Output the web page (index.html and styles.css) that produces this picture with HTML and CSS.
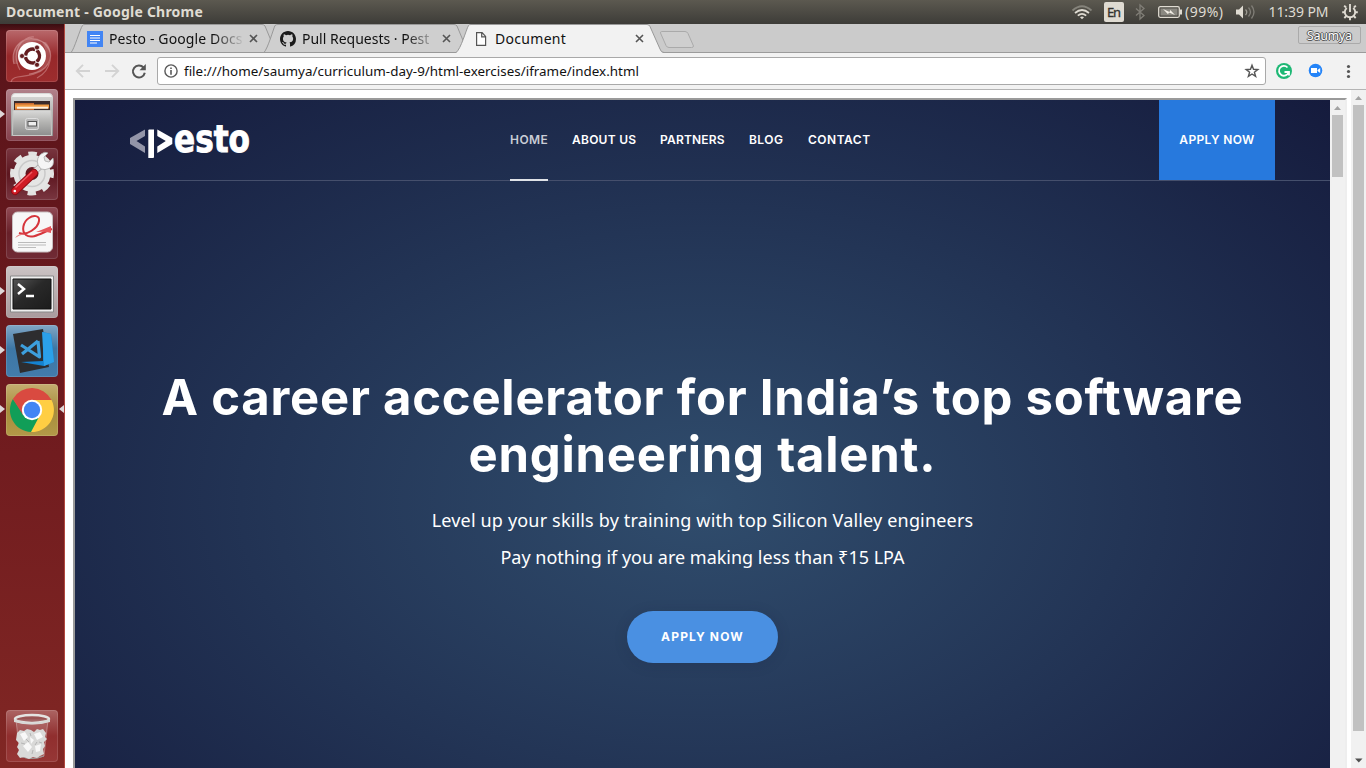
FILE: index.html
```html
<!DOCTYPE html>
<html lang="en">
<head>
<meta charset="utf-8">
<title>Document</title>
<link rel="stylesheet" href="styles.css">
</head>
<body>
<div class="panel">
  <span class="panel-title">Document - Google Chrome</span>
  <svg class="indicators" width="300" height="24" viewBox="1066 0 300 24">
    <g fill="none" stroke-width="1.700">
      <path d="M1072.500 10.500 Q1082 2 1091.500 10.500" stroke="#85837b"/>
      <path d="M1075 13 Q1082 7 1089 13" stroke="#dfdbd2"/>
      <path d="M1077.800 15.700 Q1082 12 1086.200 15.700" stroke="#dfdbd2"/>
    </g>
    <path d="M1080 17.300 Q1082 15.800 1084 17.300 L1082 19.300z" fill="#dfdbd2"/>
    <rect x="1104" y="2" width="20" height="20" rx="2" fill="#dfdbd2"/>
    <text x="1107" y="17" class="lang" textLength="14">En</text>
    <path d="M1136 8.500 L1144 15.500 L1140 19 V5 L1144 8.500 L1136 15.500" fill="none" stroke="#807e77" stroke-width="1.300"/>
    <rect x="1158.700" y="6.700" width="20.600" height="10.600" rx="1.500" fill="none" stroke="#dfdbd2" stroke-width="1.300"/>
    <rect x="1160.500" y="8.500" width="17" height="7" fill="#8a8881"/>
    <path d="M1180 9.500h2v5h-2" fill="#dfdbd2"/>
    <path d="M1163 9l6.500 3 .8-2 4.700 5-6-2.500-1 1.700z" fill="#f2eee6"/>
    <text x="1185" y="17" class="ind" textLength="38">(99%)</text>
    <path d="M1236 9.500h3l4-4v13l-4-4h-3z" fill="#dfdbd2"/>
    <path d="M1245.500 9.500q2.500 2.500 0 5.500" stroke="#9b9991" fill="none" stroke-width="1.300"/>
    <path d="M1248.500 7.500q4 4.500 0 9M1251.500 5.500q5 6.500 0 13" stroke="#807e77" fill="none" stroke-width="1.300"/>
    <text x="1268.500" y="17" class="ind" textLength="60">11:39 PM</text>
    <g fill="none" stroke="#dfdbd2">
      <path d="M1346.800 8 A5.200 5.200 0 1 0 1353.200 8" stroke-width="1.900"/>
      <path d="M1350 4v8" stroke-width="1.900"/>
      <path d="M1346 7.500l-1.800-1.800M1354 7.500l1.800-1.800M1345 12.300h-2.800M1355 12.300h2.800M1346.300 16l-2 2M1353.700 16l2 2M1350 17.500v2.700" stroke-width="1.900"/>
    </g>
  </svg>
</div>

<div class="desktop">
  <nav class="launcher">
    <div class="app dash">
      <svg viewBox="0 0 52 52">
        <g fill="none" stroke="#f0c2c2" stroke-opacity=".38" stroke-width="1.200"><path d="M8 34C3 16 20 2 37 12C50 20 45 41 31 48M14 40C4 22 16 6 28 7M39 14C51 26 42 43 23 44M36 40C22 50 7 43 5 52"/></g>
        <path d="M40 12C50 24 43 43 24 44C40 39 44 27 36 12z" fill="#fff" opacity=".17"/>
        <path d="M8 34C3 16 20 2 37 12C22 8 10 18 12 34z" fill="#fff" opacity=".14"/>
        <circle cx="26" cy="26" r="14" fill="#fff"/>
        <circle cx="26.500" cy="26" r="7" fill="none" stroke="#641d20" stroke-width="3.400" stroke-dasharray="13.300 1.360" transform="rotate(63 26.500 26)"/>
        <g fill="#641d20" stroke="#fff" stroke-width=".7"><circle cx="16" cy="26" r="2.500"/><circle cx="31" cy="17.500" r="2.500"/><circle cx="31" cy="34.800" r="2.500"/></g>
      </svg>
    </div>
    <div class="app files run">
      <svg viewBox="0 0 52 52">
        <defs><linearGradient id="cab" x2="0" y2="1"><stop stop-color="#d9d9d8"/><stop offset=".45" stop-color="#b5b5b3"/><stop offset="1" stop-color="#8d8d8d"/></linearGradient></defs>
        <path d="M5 8q1-4 4-4h34q3 0 4 4v39H5z" fill="url(#cab)"/>
        <path d="M6 8q1-3 3-3h34q2 0 3 3z" fill="#f1f1f0"/>
        <path d="M8 12h36v10H8z" fill="#3a2b2a"/>
        <path d="M9 14h19v7H9z" fill="#c76a31"/><path d="M9 15.500h34v4H9z" fill="#f19b42"/><path d="M11 17.700h31v2H11z" fill="#fff2de"/>
        <path d="M7 21.500h38l.5 25h-39z" fill="url(#cab)" stroke="#c8c8c6"/>
        <rect x="19.500" y="29.500" width="13" height="11" rx="2" fill="#b5b5b5" stroke="#dedede"/>
        <rect x="22" y="32.500" width="8.500" height="4.500" fill="#eee" stroke="#555"/>
      </svg>
    </div>
    <div class="app settings">
      <svg viewBox="0 0 52 52">
        <circle cx="26" cy="25.500" r="19.500" fill="none" stroke="#e2e2e1" stroke-width="5" stroke-dasharray="8.200 7.115" transform="rotate(-12 26 25.500)"/>
        <circle cx="26" cy="25.500" r="12.500" fill="none" stroke="#e5e5e4" stroke-width="12"/>
        <circle cx="26" cy="25.500" r="13" fill="none" stroke="#c9c9c9" stroke-width="1.500"/>
        <path d="M24 28L38 15" stroke="#a5a5a5" stroke-width="6"/>
        <path d="M24 28L38 15" stroke="#e3e3e3" stroke-width="4.500"/>
        <path d="M32 17q-2-7 3-11 4-3 7-1l-4 4 1 4 4 1 4-4q2 8-4 10.500-4 2-8 .5z" fill="#f5f5f5" stroke="#aaa" stroke-width=".8"/>
        <path d="M9 43L28 25" stroke="#8f0b13" stroke-width="8" stroke-linecap="round"/>
        <path d="M9 43L28 25" stroke="#d01b25" stroke-width="6.200" stroke-linecap="round"/>
        <path d="M9.500 39.500L26 24" stroke="#ef5960" stroke-width="1.500"/>
        <circle cx="8.800" cy="43" r="1.300" fill="#fff"/>
      </svg>
    </div>
    <div class="app reader">
      <svg viewBox="0 0 52 52">
        <rect x="6.500" y="5" width="40" height="40" rx="5" fill="#f7f7f7" stroke="#c8bfc0"/>
        <path d="M13 26c8 3 19-5 20-12 1-6-6-6-10-3-6 4-8 13-3 17 6 5 17-3 26-6" fill="none" stroke="#d6353c" stroke-width="2"/>
        <path d="M30 25q8-3 15-6v7q-6-2-15-1z" fill="#e5565a"/>
        <path d="M9 31q4-5 10-4-6 1-10 4z" fill="#e77a7d"/>
        <path d="M12 35.500h28M12 38h28M12 40.500h18" stroke="#bbb"/>
      </svg>
    </div>
    <div class="app terminal run">
      <svg viewBox="0 0 52 52">
        <defs><linearGradient id="scr" x2="1" y2="1"><stop stop-color="#555"/><stop offset=".45" stop-color="#292929"/><stop offset="1" stop-color="#1c1c1c"/></linearGradient></defs>
        <path d="M4.500 10h43v36h-43z" fill="#eee" stroke="#888"/>
        <path d="M7 13h38v30H7z" fill="url(#scr)" stroke="#111"/>
        <path d="M12 18l6 5-6 5M20 30h8" fill="none" stroke="#fff" stroke-width="2.500"/>
      </svg>
    </div>
    <div class="app code run">
      <svg viewBox="0 0 52 52">
        <path d="M7 9L37 4l6 38-29 6z" fill="#2d2d2f"/>
        <path d="M15 37l22-1 0-29 8 2 3 28-10 4z" fill="#1583d0"/><path d="M36 7l9 2 3 28-10 4z" fill="#2ba0ea"/>
        <path d="M32 16l1.500 16L15 20M16 29L32 16" fill="none" stroke="#3d9fdc" stroke-width="3.200" stroke-linejoin="round"/>
      </svg>
    </div>
    <div class="app chrome run focus">
      <svg viewBox="0 0 52 52">
        <path d="M26 26V16H45.500A22 22 0 0 1 25 48z" fill="#ffce43"/>
        <path d="M26 26L34 31 25 48A22 22 0 0 1 6.900 15L18 31z" fill="#119e58"/>
        <path d="M6.900 15L17 31 26 16H45.500A22 22 0 0 0 6.900 15z" fill="#d94a40"/>
        <circle cx="26" cy="26" r="10.200" fill="#fff"/><circle cx="26" cy="26" r="8.200" fill="#4285f4"/>
      </svg>
    </div>
    <div class="app trash">
      <svg viewBox="0 0 52 52">
        <path d="M10 10L14 46q12 5 24 0L42 10z" fill="#e6cccc" fill-opacity=".2" stroke="#fff" stroke-opacity=".3"/>
        <path d="M14 46q12 5 24 0" fill="none" stroke="#999"/>
        <path d="M11 23l3-3 4 1 3-2 4 1 3 2 3-3 3 1 3-1 3 4-1 4 2 2-3 3 1 4-2 3 1 5-4 2-3 2-4-1-4 2-5-2-4 1-3-4 2-4-2-3 2-4-3-3z" fill="#d9d9d8"/>
        <path d="M14 24l5-2 3 5-4 4zM28 24l6-2 3 5-6 3zM17 36l5-4 4 5-4 5zM29 36l6-2-1 7-4 1zM24 27l4 3-3 4z" fill="#f8f8f8"/>
        <path d="M20 29l3 3M15 33l4 1M27 40l-1 4M33 32l3 1M24 23l1 3M31 32l-2 3" stroke="#b5b5b5" fill="none"/>
        <ellipse cx="26" cy="9" rx="17" ry="4" fill="#8f5555" fill-opacity=".5" stroke="#e4e4e2" stroke-width="2.500"/>
        <path d="M8 9q18 7 36 0v3q-18 5-36 0z" fill="#d8d8d6"/>
      </svg>
    </div>
  </nav>

  <main class="browser">
    <div class="tabs">
      <svg class="tab-shapes" width="1301" height="29" viewBox="65 24 1301 29">
        <path d="M65 52.500H1366" stroke="#9b9b9b"/>
        <path d="M71 52.500C74 50 80 29 82.500 25.500Q83 24.500 85 24.500H262Q264 24.500 265 26L276 52.500z" fill="#cfcfcf" stroke="#999"/>
        <path d="M264 52.500C268 48 273 30 275 25.500Q276 24.500 278 24.500H454Q456 24.500 457 26L468 52.500z" fill="#cfcfcf" stroke="#999"/>
        <path d="M456 53C461 50 466 30 468.500 25.500Q469 24.500 471 24.500H647Q649 24.500 650 26.500L660 49Q661 52.500 664 53z" fill="#f2f2f2"/>
        <path d="M456 52.500C461 49 466 30 468.500 25.500Q469 24.500 471 24.500H647Q649 24.500 650 26.500L660 49Q661 52.500 664 52.500" fill="none" stroke="#999"/>
        <path d="M661.500 31.500H685q2 0 3 2L693.500 46q0 1.500-2 1.500H669q-2 0-3-2L660.500 33q0-1.500 1-1.500z" fill="#cfcfcf" stroke="#aaa"/>
      </svg>
      <div class="tab">
        <svg width="16" height="16"><path d="M0 0h16v16H0z" fill="#4285f4"/><path d="M3 4.500h10M3 7h10M3 9.500h10M3 12h7" stroke="#fff" stroke-width="1.200"/></svg>
        <span class="tab-text fade docs">Pesto - Google Docs</span>
        <svg class="close" width="9" height="9"><path d="M1 1l7 7M8 1L1 8"/></svg>
      </div>
      <div class="tab">
        <svg width="16" height="16" viewBox="0 0 16 16"><path fill="#1b1b1b" d="M8 0C3.580 0 0 3.580 0 8c0 3.540 2.290 6.530 5.470 7.590.4.070.55-.17.55-.38v-1.490c-2.010.37-2.530-.49-2.690-.94-.09-.23-.48-.94-.82-1.130-.28-.15-.68-.52-.01-.53.63-.01 1.080.58 1.230.82.72 1.210 1.870.87 2.330.66.07-.52.28-.87.51-1.070-1.780-.2-3.640-.89-3.640-3.950 0-.87.31-1.590.82-2.150-.08-.2-.36-1.020.08-2.120 0 0 .67-.21 2.200.82a7.600 7.600 0 0 1 4 0c1.530-1.040 2.200-.82 2.200-.82.44 1.100.16 1.920.08 2.120.51.56.82 1.270.82 2.150 0 3.070-1.870 3.750-3.650 3.950.29.25.54.73.54 1.480v2.200c0 .21.15.46.55.38A8 8 0 0 0 16 8c0-4.420-3.580-8-8-8z"/></svg>
        <span class="tab-text fade pulls">Pull Requests · Pest</span>
        <svg class="close" width="9" height="9"><path d="M1 1l7 7M8 1L1 8"/></svg>
      </div>
      <div class="tab">
        <svg width="16" height="16"><path d="M3.600 1.600h5.500l3.500 3.800v9h-9zM8.700 1.600v4.200h4" fill="#fff" stroke="#555" stroke-width="1.200"/></svg>
        <span class="tab-text page-name">Document</span>
        <svg class="close" width="9" height="9"><path d="M1 1l7 7M8 1L1 8"/></svg>
      </div>
      <span class="profile">Saumya</span>
    </div>

    <div class="toolbar">
      <svg class="nav-buttons" width="84" height="36" viewBox="0 0 84 36">
        <g fill="none" stroke="#d3d3d3" stroke-width="1.900"><path d="M25 18H12.500M18 11.800L11.800 18 18 24.200"/><path d="M40 18h12.500M47 11.800L53.200 18 47 24.200"/></g>
        <path d="M78.500 14.500A6 6 0 1 0 79.800 19.700" fill="none" stroke="#555" stroke-width="2"/><path d="M80.800 11v6.300h-6.300z" fill="#555"/>
      </svg>
      <div class="omnibox">
        <svg width="14" height="14"><circle cx="7" cy="7" r="6.100" fill="none" stroke="#5a5a5a" stroke-width="1.400"/><path d="M7 6v4.700M7 3.400V5" stroke="#5a5a5a" stroke-width="1.600"/></svg>
        <span class="url">file:///home/saumya/curriculum-day-9/html-exercises/iframe/index.html</span>
        <svg class="star" width="16" height="16"><path d="M8 2.300l1.500 4 4.300.2-3.400 2.700 1.200 4.200L8 11l-3.600 2.400 1.200-4.200-3.400-2.700 4.300-.2z" fill="none" stroke="#555" stroke-width="1.400"/></svg>
      </div>
      <svg class="extensions" width="100" height="36" viewBox="1266 53 100 36">
        <circle cx="1284" cy="71" r="8" fill="#1eb875"/><path d="M1287.500 67.500A4.900 4.900 0 1 0 1288.500 72.500M1284.500 72h4.500v3.500" fill="none" stroke="#fff" stroke-width="1.800"/>
        <circle cx="1315.500" cy="70.500" r="6.800" fill="#2484f8"/><path d="M1311 68h6v5h-6zM1317.500 70l2.700-2v5l-2.700-2z" fill="#fff"/>
        <g fill="#555"><circle cx="1348.500" cy="66.500" r="1.600"/><circle cx="1348.500" cy="71.500" r="1.600"/><circle cx="1348.500" cy="76.500" r="1.600"/></g>
      </svg>
    </div>

    <div class="viewport">
      <div class="frame">
        <div class="site">
          <header class="site-header">
            <svg class="logo" width="134" height="50" viewBox="128 116 134 50">
              <path d="M145 129.500v6.500l-8.500 5 8.500 5.500v6.500l-15-9v-6z" fill="#9395a8"/>
              <path d="M148.300 130.500q0-1 1-1h4.700v27.500q0 1-1 1h-4.700z" fill="#fff"/><path d="M157.300 129.500v6.500l8.500 5-8.500 5.500v6.500l15-9v-6z" fill="#fff"/>
              <text x="174" y="151.500" class="logo-text" textLength="76" lengthAdjust="spacingAndGlyphs">esto</text>
            </svg>
            <nav class="menu">
              <a class="active">HOME</a><a class="m2">ABOUT US</a><a class="m3">PARTNERS</a><a class="m4">BLOG</a><a class="m5">CONTACT</a>
            </nav>
            <a class="apply-box"><span>APPLY NOW</span></a>
          </header>
          <section class="hero">
            <h1><span class="h-a">A career accelerator for India’s top software</span><br><span class="h-b">engineering talent.</span></h1>
            <p class="p-a">Level up your skills by training with top Silicon Valley engineers</p>
            <p class="p-b">Pay nothing if you are making less than ₹15 LPA</p>
            <a class="cta"><span>APPLY NOW</span></a>
          </section>
        </div>
        <div class="scrollbar inner">
          <svg width="15" height="15"><path d="M4 10l3.500-4 3.500 4z" fill="#a3a3a3"/></svg>
          <div class="thumb"></div>
        </div>
      </div>
      <div class="scrollbar outer">
        <svg width="15" height="15"><path d="M4 10l3.500-4 3.500 4z" fill="#a3a3a3"/></svg>
        <div class="thumb"></div>
        <svg class="down" width="15" height="15"><path d="M4 5.500h7.500l-3.700 4z" fill="#505050"/></svg>
      </div>
    </div>
  </main>
</div>
</body>
</html>
```
FILE: styles.css
```css
* { box-sizing: border-box; }
body { margin: 0; width: 1366px; height: 768px; overflow: hidden; font-family: "Noto Sans", "Open Sans", sans-serif; background: #fff; }
svg { display: block; flex: none; }
a, span, p { white-space: nowrap; }

.panel { height: 24px; display: flex; justify-content: space-between; align-items: center; background: linear-gradient(#5c5950, #3d3c38); color: #dfdbd2; padding-left: 6px; }
.panel-title { font-size: 14px; font-weight: 700; line-height: 24px; letter-spacing: .22px; }
.ind { font-size: 14px; fill: #dfdbd2; }
.lang { font-size: 13px; fill: #33322e; stroke: #33322e; stroke-width: .3px; }

.desktop { display: flex; height: 744px; }
.launcher { width: 65px; padding: 6px 0 6px 6px; display: flex; flex-direction: column; gap: 7px; background: linear-gradient(#3a0d11, #59141a 7px, #6e1a1e 50%, #812724); border-right: 1px solid #b1473e; }
.app { position: relative; width: 52px; height: 52px; border-radius: 4px; box-shadow: inset 0 0 0 1px rgba(255,255,255,.13); background: linear-gradient(#9e5a66, #74303b 45%, #7a3640); }
.dash { background: linear-gradient(#b9696c, #97282a 50%, #9d2d2e); }
.files { background: linear-gradient(#b1818a, #85404c); }
.settings { background: linear-gradient(#793640, #5d161f 50%, #793640); }
.reader { background: linear-gradient(#914b55, #682029 50%, #702b35); }
.terminal { background: linear-gradient(#cbc3c4, #a99b9d); }
.code { background: linear-gradient(#81a6c5, #3d77a5 45%, #437cab); }
.chrome { background: linear-gradient(#c5ae70, #a78d3c 50%, #b39948); }
.trash { margin-top: auto; background: linear-gradient(#ac6463, #902e2e 50%, #963736); }
.run::before { content: ""; position: absolute; left: -6px; top: 21px; border: 4.5px solid transparent; border-left: 5px solid #ded7d8; border-right: 0; }
.focus::after { content: ""; position: absolute; right: -6px; top: 21px; border: 4.5px solid transparent; border-right: 5px solid #ded7d8; border-left: 0; }

.browser { flex: 1; display: flex; flex-direction: column; }
.tabs { position: relative; height: 29px; background: #cbcbcb; display: flex; padding-left: 22px; }
.tab-shapes { position: absolute; left: 0; top: 0; }
.tab { position: relative; display: flex; align-items: center; width: 193px; }
.tab-text { width: 136px; margin-left: 6px; overflow: hidden; font-size: 14px; line-height: 26px; color: #111; }
.docs { letter-spacing: .12px; }
.page-name { letter-spacing: .3px; }
.fade { -webkit-mask-image: linear-gradient(90deg, #000 104px, transparent 136px); mask-image: linear-gradient(90deg, #000 104px, transparent 136px); }
.close { margin-left: 4px; fill: none; stroke: #555; stroke-width: 1.6; }
.profile { position: relative; margin-left: auto; margin-right: 5px; margin-top: 2px; width: 63px; height: 18px; border: 1px solid #aaa; border-radius: 2px; font-size: 12px; line-height: 17px; text-align: center; color: #fff; text-shadow: 1px 0 #555, -1px 0 #555, 0 1px #555, 0 -1px #555; }

.toolbar { height: 37px; background: #f2f2f2; border-bottom: 1px solid #b4b4b4; display: flex; align-items: center; }
.nav-buttons { margin-right: 8px; }
.omnibox { width: 1109px; height: 28px; background: #fff; border: 1px solid #a9a9a9; border-radius: 3px; display: flex; align-items: center; padding: 0 5px 0 6px; }
.url { margin-left: 6px; font-size: 13.4px; line-height: 24px; letter-spacing: .02px; color: #111; }
.star { margin-left: auto; }

.viewport { flex: 1; display: flex; justify-content: space-between; padding-left: 8px; background: #fff; overflow: hidden; }
.frame { width: 1274px; height: 690px; margin-top: 8px; border: 2px solid; border-color: #9a9a9a #eee #eee #9a9a9a; display: flex; }
.site { width: 1255px; height: 800px; background: radial-gradient(ellipse 887px 566px at 627px 400px, #304d6d, #151b3d); color: #fff; font-family: Inter, sans-serif; }
.site-header { height: 81px; border-bottom: 1px solid #454f6c; display: flex; padding: 0 55px 0 53px; }
.logo { margin-top: 16px; }
.logo-text { font: 700 38px "DejaVu Sans", sans-serif; fill: #fff; stroke: #fff; stroke-width: 1px; }
.menu { display: flex; gap: 24px; margin-left: 248px; height: 81px; font-size: 12px; font-weight: 600; line-height: 80px; letter-spacing: .45px; }
.menu .active { width: 38px; color: #c9cdd6; border-bottom: 2px solid #dfe2e7; }
.m2 { width: 64px; letter-spacing: .25px; }
.m3 { width: 65px; letter-spacing: .2px; }
.m4 { width: 35px; }
.m5 { width: 64px; letter-spacing: .5px; }
.apply-box { margin-left: auto; width: 116px; height: 80px; text-align: center; background: #2779dd; font-size: 12px; font-weight: 600; line-height: 80px; letter-spacing: .35px; }
.hero { display: flex; flex-direction: column; align-items: center; padding-top: 188px; }
h1 { margin: 0 0 19px; font-size: 49px; font-weight: 700; line-height: 57px; text-align: center; letter-spacing: .76px; }
p { margin: 0; font: 18px/37px "Noto Sans", sans-serif; }
.p-a { letter-spacing: .17px; }
.cta { margin-top: 35px; width: 151px; height: 52px; border-radius: 26px; background: #4a90e2; font-size: 12px; font-weight: 700; line-height: 52px; letter-spacing: 1.15px; text-align: center; box-shadow: 0 2px 14px rgba(20,30,60,.15); }

.scrollbar { width: 15px; background: #f1f1f1; }
.thumb { width: 11px; margin-left: 2px; background: #c1c1c1; }
.inner .thumb { height: 62px; }
.outer .thumb { height: 626px; }
.down { margin-top: 22px; }
```
